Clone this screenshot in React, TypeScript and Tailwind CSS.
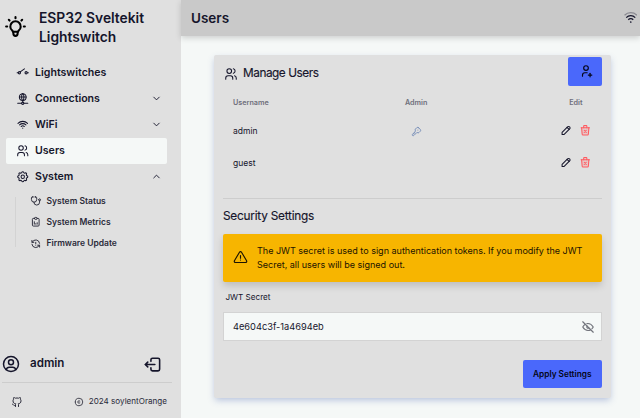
import type { ReactNode } from "react";
import type { IconType } from "react-icons";
import {
  TbAlertTriangle,
  TbBrandGithub,
  TbBulb,
  TbChevronDown,
  TbChevronUp,
  TbCircuitSwitchOpen,
  TbCopyright,
  TbEyeOff,
  TbKey,
  TbLogout2,
  TbNetwork,
  TbPencil,
  TbRefreshAlert,
  TbReportAnalytics,
  TbSettings,
  TbStethoscope,
  TbTrashX,
  TbUserCircle,
  TbUserPlus,
  TbUsers,
  TbWifi,
} from "react-icons/tb";

type ItemProps = { icon: IconType; label: string; active?: boolean; chevron?: ReactNode };

function MenuItem({ icon: Icon, label, active, chevron }: ItemProps) {
  return (
    <li
      className={`flex h-[26px] items-center gap-[5.5px] rounded-[2px] pl-[10px] pr-[5px] text-[10.6px] font-semibold ${
        active ? "bg-[#f5f8f7]" : ""
      }`}
    >
      <Icon className="size-[13.5px] shrink-0 stroke-[1.8]" />
      <span className="flex-1">{label}</span>
      {chevron}
    </li>
  );
}

function SubItem({ icon: Icon, label }: ItemProps) {
  return (
    <li className="flex h-[21.2px] items-center gap-[5px] text-[8.5px] font-semibold text-[#2b2b3a]">
      <Icon className="size-[11.5px] shrink-0" />
      {label}
    </li>
  );
}

function Sidebar() {
  return (
    <aside className="flex h-full w-[181px] shrink-0 flex-col bg-[#e0e0e0]">
      <div className="flex h-[59px] items-start pl-[3px] pt-[8px]">
        <TbBulb className="mt-[6px] size-[25px] text-black" />
        <h1 className="ml-[11px] w-[130px] pt-[0.5px] text-[13.8px] font-semibold leading-[19px]">
          ESP32 Sveltekit Lightswitch
        </h1>
      </div>
      <ul className="ml-[6px] w-[161px] pt-[0.8px]">
        <MenuItem icon={TbCircuitSwitchOpen} label="Lightswitches" />
        <MenuItem icon={TbNetwork} label="Connections" chevron={<TbChevronDown className="size-[11px]" />} />
        <MenuItem icon={TbWifi} label="WiFi" chevron={<TbChevronDown className="size-[11px]" />} />
        <MenuItem icon={TbUsers} label="Users" active />
        <MenuItem icon={TbSettings} label="System" chevron={<TbChevronUp className="size-[11px]" />} />
      </ul>
      <div className="flex">
        <div className="ml-[15px] mt-[7px] h-[50px] w-px bg-[#d3d3d3]" />
        <ul className="ml-[14px] pt-[0.6px]">
          <SubItem icon={TbStethoscope} label="System Status" />
          <SubItem icon={TbReportAnalytics} label="System Metrics" />
          <SubItem icon={TbRefreshAlert} label="Firmware Update" />
        </ul>
      </div>
      <div className="mt-auto flex h-[36px] items-center pl-px">
        <TbUserCircle className="size-[20px] stroke-[1.8]" />
        <span className="ml-[9px] flex-1 text-[11.6px] font-semibold">admin</span>
        <TbLogout2 className="mr-[19.5px] size-[19px]" />
      </div>
      <div className="ml-[2px] h-px w-[170px] bg-[#cdcdcd]" />
      <div className="flex h-[35px] items-center pb-px pl-[11px] pr-[14px] pt-[3px] text-[#2b2b3a]">
        <TbBrandGithub className="size-[12px]" />
        <span className="flex-1" />
        <TbCopyright className="size-[10px]" />
        <span className="ml-[5px] text-[8.1px]">2024 soylentOrange</span>
      </div>
    </aside>
  );
}

function SignalIcon() {
  return (
    <svg viewBox="0 0 24 24" fill="none" stroke="currentColor" strokeWidth="2.2" className="size-[13.5px]">
      <path d="M1 7.5a15.5 15.5 0 0 1 22 0" opacity=".35" />
      <path d="M4 11.7a11 11 0 0 1 16 0" />
      <path d="M7.6 15.6a6.1 6.1 0 0 1 8.8 0" />
      <circle cx="12" cy="19.5" r="1.5" fill="currentColor" stroke="none" />
    </svg>
  );
}

function UserRow({ name, admin }: { name: string; admin?: boolean }) {
  return (
    <div className="flex h-[32.3px] items-center text-[8.5px]">
      <span className="w-[153px]">{name}</span>
      <span className="flex w-[60px] justify-center text-[#7088b5]">
        {admin && <TbKey className="size-[11px]" />}
      </span>
      <span className="ml-auto flex items-center gap-[6.5px] pb-[2px]">
        <TbPencil className="size-[12.5px]" />
        <TbTrashX className="size-[12.5px] fill-[#ff686b]/20 text-[#ff5a60]" />
      </span>
    </div>
  );
}

function UsersCard() {
  return (
    <section className="ml-[33px] mt-[19px] flex h-[343px] w-[397px] flex-col rounded-[2px] bg-[#e0e0e0] pl-[9px] pr-[9.5px] shadow-[0_3px_7px_-1px_rgba(60,90,170,0.35)]">
      <div className="flex h-[34px] items-start">
        <TbUsers className="ml-px mt-[12px] size-[14px] stroke-[1.8]" />
        <h2 className="ml-[5px] mt-[10px] text-[11.8px] tracking-[-0.45px] leading-[16px] [-webkit-text-stroke:0.15px]">
          Manage Users
        </h2>
        <button className="ml-auto mt-[2px] flex h-[28.5px] w-[34px] items-center justify-center rounded-[2px] bg-[#4a68fb] text-[#050617]">
          <TbUserPlus className="ml-[3px] size-[14px]" />
        </button>
      </div>
      <div className="h-[108.5px] px-[10px]">
        <div className="flex h-[26px] items-center pt-[2px] text-[7.2px] font-semibold text-[#6f6f7c]">
          <span className="w-[172px]">Username</span>
          <span>Admin</span>
          <span className="ml-auto pr-[9px]">Edit</span>
        </div>
        <UserRow name="admin" admin />
        <UserRow name="guest" />
      </div>
      <div className="h-px shrink-0 bg-[#cdcdcd]" />
      <h2 className="mt-[8.5px] text-[11.8px] tracking-[-0.22px] leading-[18px] [-webkit-text-stroke:0.15px]">
        Security Settings
      </h2>
      <div className="mt-[8.5px] flex h-[48px] shrink-0 items-center rounded-[2px] bg-[#f7b500] pl-[10px] text-[#1b1300] shadow-[0_4px_7px_rgba(0,0,0,0.15)]">
        <TbAlertTriangle className="size-[15px] stroke-[1.8]" />
        <p className="ml-[9px] text-[9.03px] leading-[14px]">
          The JWT secret is used to sign authentication tokens. If you modify the JWT
          <br />
          Secret, all users will be signed out.
        </p>
      </div>
      <label className="ml-[2.5px] mt-[8px] text-[8.1px] leading-[14px]">JWT Secret</label>
      <div className="mt-[8.5px] flex h-[28.5px] shrink-0 items-center border border-[#d3d3d3] bg-[#f5f8f7] pl-[9px] pr-[6px] pt-px">
        <span className="flex-1 text-[9.25px]">4e604c3f-1a4694eb</span>
        <TbEyeOff className="size-[14px] text-[#72747c]" />
      </div>
      <button className="ml-auto mt-[19px] h-[28px] w-[78.5px] shrink-0 rounded-[2px] bg-[#4a68fb] pt-px text-[8.3px] font-semibold text-[#050617]">
        Apply Settings
      </button>
    </section>
  );
}

export default function App() {
  return (
    <div className="flex h-[418px] w-[640px] overflow-hidden bg-[#f5f8f7] font-['Inter',sans-serif] text-[#15152b]">
      <Sidebar />
      <main className="min-w-0 flex-1">
        <header className="flex h-[36px] items-center justify-between bg-[#c9c9c9] pl-[10px] pr-[3px] shadow-[0_2px_6px_rgba(0,0,0,0.17)]">
          <h1 className="text-[13.5px] font-semibold">Users</h1>
          <SignalIcon />
        </header>
        <UsersCard />
      </main>
    </div>
  );
}
